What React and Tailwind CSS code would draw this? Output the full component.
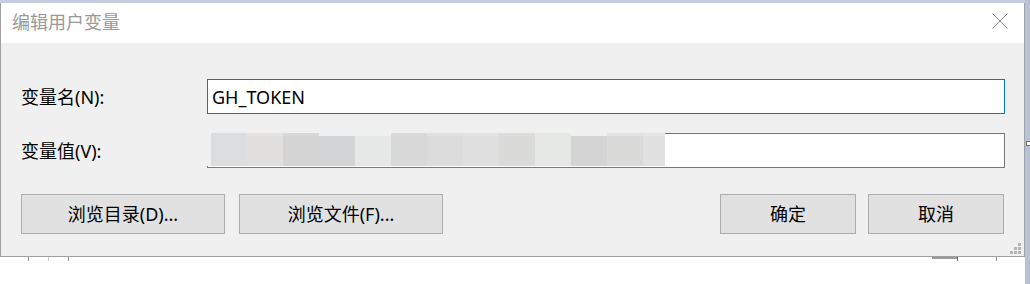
import React from "react";

const blocks = [
  { w: 36, top: "#dcdddf", bot: "#dcdddf" },
  { w: 36, top: "#e3e3e3", bot: "#e0dfdd" },
  { w: 36, top: "#d8d8d8", bot: "#d4d4d4" },
  { w: 36, top: "#f0f0f0", bot: "#d3d4d6" },
  { w: 36, top: "#eef1f2", bot: "#e6e8e7" },
  { w: 36, top: "#d9d9d9", bot: "#d8d8d8" },
  { w: 36, top: "#dfe1e3", bot: "#dcdcdc" },
  { w: 36, top: "#e3e3e3", bot: "#dfdfdf" },
  { w: 36, top: "#dcdcdc", bot: "#dadad8" },
  { w: 36, top: "#e6e8e6", bot: "#e6e8e6" },
  { w: 36, top: "#f0f0f0", bot: "#d4d4d4" },
  { w: 36, top: "#e2e4e6", bot: "#dadad8" },
  { w: 22, top: "#e4e6e8", bot: "#e0e1e0" },
];

function Btn({ w, children }) {
  return (
    <button
      className={`${w} h-[40px] border border-[#adadad] bg-[#e1e1e1] text-[18px] leading-none text-black flex items-center justify-center`}
    >
      {children}
    </button>
  );
}

export default function App() {
  return (
    <div className="w-[1030px] h-[284px] flex bg-white overflow-hidden font-['Noto_Sans','Noto_Sans_CJK_SC',sans-serif]">
      <div className="w-[1025px] flex flex-col">
        <div className="h-[3px] bg-[#c4cee0]" />
        <div className="w-[1025px] border-l border-r border-b border-[#a0a0a0] flex flex-col">
          {/* title bar */}
          <div className="h-[40px] bg-white flex items-start justify-between pl-[11px] pr-[16px]">
            <div className="pt-[7px] text-[18px] leading-[24px] text-[#999999] tracking-[0px]">
              编辑用户变量
            </div>
            <svg width="16" height="16" viewBox="0 0 16 16" className="mt-[10px]">
              <path d="M0.5 0.5 L15.5 15.5 M15.5 0.5 L0.5 15.5" stroke="#8a8a8a" strokeWidth="1" fill="none" />
            </svg>
          </div>
          {/* body */}
          <div className="relative h-[213px] bg-[#f0f0f0] pl-[20px] pr-[19px] pt-[36px] flex flex-col text-black">
            <div className="flex items-center h-[35px]">
              <div className="w-[186px] text-[18px] leading-none">变量名(N):</div>
              <div className="flex-1 h-[35px] bg-white border border-[#0078d7] flex items-center pl-[4px] text-[18px] leading-none">
                GH_TOKEN
              </div>
            </div>
            <div className="flex items-center h-[35px] mt-[19px]">
              <div className="w-[186px] text-[18px] leading-none">变量值(V):</div>
              <div className="relative flex-1 h-[35px] bg-white border border-[#7a7a7a]">
                <div className="absolute left-[-1px] top-[-1px] h-[33px] flex">
                  <div className="w-[4px] bg-[#f0f0f0]" />
                  {blocks.map((b, i) => (
                    <div key={i} className="flex flex-col" style={{ width: b.w }}>
                      <div className="h-[3px]" style={{ background: b.top }} />
                      <div className="flex-1" style={{ background: b.bot }} />
                    </div>
                  ))}
                </div>
              </div>
            </div>
            <div className="flex items-center mt-[26px] pr-[1px]">
              <Btn w="w-[204px]">浏览目录(D)...</Btn>
              <div className="w-[14px]" />
              <Btn w="w-[204px]">浏览文件(F)...</Btn>
              <div className="flex-1" />
              <Btn w="w-[136px]">确定</Btn>
              <div className="w-[12px]" />
              <Btn w="w-[136px]">取消</Btn>
            </div>
            {/* resize grip */}
            <div className="absolute right-[3px] bottom-[2px] grid grid-cols-3 gap-[1px]">
              <div className="w-[3px] h-[3px]" />
              <div className="w-[3px] h-[3px]" />
              <div className="w-[3px] h-[3px] bg-[#b4b4b4]" />
              <div className="w-[3px] h-[3px]" />
              <div className="w-[3px] h-[3px] bg-[#b4b4b4]" />
              <div className="w-[3px] h-[3px] bg-[#b4b4b4]" />
              <div className="w-[3px] h-[3px] bg-[#b4b4b4]" />
              <div className="w-[3px] h-[3px] bg-[#b4b4b4]" />
              <div className="w-[3px] h-[3px] bg-[#b4b4b4]" />
            </div>
          </div>
        </div>
        {/* background fragment below dialog */}
        <div className="flex-1 bg-white flex items-start">
          <div className="ml-[28px] w-[1px] h-[4px] bg-[#9a9a9a]" />
          <div className="ml-[19px] w-[1px] h-[4px] bg-[#c8c8c8]" />
          <div className="ml-[19px] w-[1px] h-[4px] bg-[#9a9a9a]" />
          <div className="ml-[863px] w-[25px] h-[2px] bg-[#9a9a9a]" />
          <div className="w-[1px] h-[4px] bg-[#707070]" />
          <div className="ml-[38px] w-[1px] h-[4px] bg-[#9a9a9a]" />
        </div>
      </div>
      <div className="w-[5px] bg-[#b6c2d6] flex flex-col">
        <div className="mt-[141px] ml-[1px] w-[4px] h-[5px] bg-white border border-r-0 border-[#707070]" />
      </div>
    </div>
  );
}
